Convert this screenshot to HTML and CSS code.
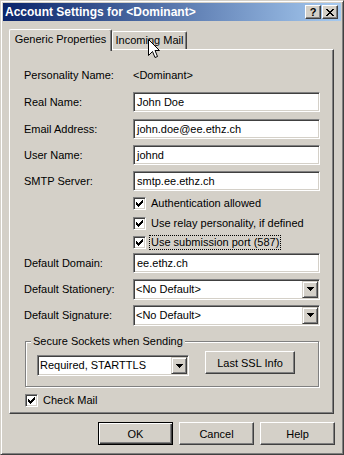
FILE: index.html
```html
<!DOCTYPE html>
<html lang="en">
<head>
    <meta charset="UTF-8">
    <title>Account Settings</title>
    <link rel="stylesheet" href="styles.css">
</head>
<body>
    <!-- Dialog window -->
    <div class="window">
        <div class="titlebar">
            <span class="title">Account Settings for &lt;Dominant&gt;</span>
            <div class="caption-btns">
                <span class="cap-btn cap-help">?</span>
                <span class="cap-btn">
                    <svg width="8" height="7" viewBox="0 0 8 7" shape-rendering="crispEdges"><path d="M0 0h2v1h-2zM6 0h2v1h-2zM1 1h2v1h-2zM5 1h2v1h-2zM2 2h4v1h-4zM3 3h2v1h-2zM2 4h4v1h-4zM1 5h2v1h-2zM5 5h2v1h-2zM0 6h2v1h-2zM6 6h2v1h-2z" fill="#000"/></svg>
                </span>
            </div>
        </div>

        <div class="client">
            <div class="tabs">
                <div class="tab tab-active">Generic Properties</div>
                <div class="tab tab-idle">Incoming Mail</div>
            </div>

            <div class="panel">
                <div class="row row-first">
                    <span class="label">Personality Name:</span>
                    <span>&lt;Dominant&gt;</span>
                </div>

                <div class="row row-gap7">
                    <span class="label">Real Name:</span>
                    <div class="edit">John Doe</div>
                </div>

                <div class="row row-gap7">
                    <span class="label">Email Address:</span>
                    <div class="edit">john.doe@ee.ethz.ch</div>
                </div>

                <div class="row">
                    <span class="label">User Name:</span>
                    <div class="edit">johnd</div>
                </div>

                <div class="row">
                    <span class="label">SMTP Server:</span>
                    <div class="edit">smtp.ee.ethz.ch</div>
                </div>

                <div class="check-row indent">
                    <span class="check"><svg width="7" height="7" viewBox="0 0 7 7" shape-rendering="crispEdges"><path d="M6 0h1v1h-1zM5 1h2v1h-2zM0 2h1v1h-1zM4 2h3v1h-3zM0 3h2v1h-2zM3 3h3v1h-3zM0 4h5v1h-5zM1 5h3v1h-3zM2 6h1v1h-1z" fill="#000"/></svg></span>
                    <span class="check-label">Authentication allowed</span>
                </div>

                <div class="check-row indent">
                    <span class="check"><svg width="7" height="7" viewBox="0 0 7 7" shape-rendering="crispEdges"><path d="M6 0h1v1h-1zM5 1h2v1h-2zM0 2h1v1h-1zM4 2h3v1h-3zM0 3h2v1h-2zM3 3h3v1h-3zM0 4h5v1h-5zM1 5h3v1h-3zM2 6h1v1h-1z" fill="#000"/></svg></span>
                    <span class="check-label">Use relay personality, if defined</span>
                </div>

                <div class="check-row indent check-row-tight">
                    <span class="check"><svg width="7" height="7" viewBox="0 0 7 7" shape-rendering="crispEdges"><path d="M6 0h1v1h-1zM5 1h2v1h-2zM0 2h1v1h-1zM4 2h3v1h-3zM0 3h2v1h-2zM3 3h3v1h-3zM0 4h5v1h-5zM1 5h3v1h-3zM2 6h1v1h-1z" fill="#000"/></svg></span>
                    <span class="check-label focused">Use submission port (587)</span>
                </div>

                <div class="row row-gap3">
                    <span class="label">Default Domain:</span>
                    <div class="edit">ee.ethz.ch</div>
                </div>

                <div class="row">
                    <span class="label">Default Stationery:</span>
                    <div class="combo combo-wide">
                        <span class="combo-text">&lt;No Default&gt;</span>
                        <span class="combo-arrow"><svg width="7" height="4" viewBox="0 0 7 4" shape-rendering="crispEdges"><path d="M0 0h7v1h-7zM1 1h5v1h-5zM2 2h3v1h-3zM3 3h1v1h-1z" fill="#000"/></svg></span>
                    </div>
                </div>

                <div class="row">
                    <span class="label">Default Signature:</span>
                    <div class="combo combo-wide">
                        <span class="combo-text">&lt;No Default&gt;</span>
                        <span class="combo-arrow"><svg width="7" height="4" viewBox="0 0 7 4" shape-rendering="crispEdges"><path d="M0 0h7v1h-7zM1 1h5v1h-5zM2 2h3v1h-3zM3 3h1v1h-1z" fill="#000"/></svg></span>
                    </div>
                </div>

                <fieldset class="group">
                    <legend>Secure Sockets when Sending</legend>
                    <div class="group-row">
                        <div class="combo combo-ssl">
                            <span class="combo-text">Required, STARTTLS</span>
                            <span class="combo-arrow"><svg width="7" height="4" viewBox="0 0 7 4" shape-rendering="crispEdges"><path d="M0 0h7v1h-7zM1 1h5v1h-5zM2 2h3v1h-3zM3 3h1v1h-1z" fill="#000"/></svg></span>
                        </div>
                        <button type="button" class="btn btn-ssl">Last SSL Info</button>
                    </div>
                </fieldset>

                <div class="check-row check-mail">
                    <span class="check"><svg width="7" height="7" viewBox="0 0 7 7" shape-rendering="crispEdges"><path d="M6 0h1v1h-1zM5 1h2v1h-2zM0 2h1v1h-1zM4 2h3v1h-3zM0 3h2v1h-2zM3 3h3v1h-3zM0 4h5v1h-5zM1 5h3v1h-3zM2 6h1v1h-1z" fill="#000"/></svg></span>
                    <span class="check-label">Check Mail</span>
                </div>
            </div>

            <div class="actions">
                <button type="button" class="btn btn-default">OK</button>
                <button type="button" class="btn">Cancel</button>
                <button type="button" class="btn">Help</button>
            </div>
        </div>

        <!-- mouse pointer over the second tab -->
        <svg class="cursor" width="12" height="19" viewBox="0 0 12 19">
            <path d="M0.5 0.5V16.5L4.5 12.5L7 18.5L9.5 17.5L7 11.5H11.5Z" fill="#fff" stroke="#000" stroke-width="1" stroke-linejoin="miter"/>
        </svg>
    </div>
</body>
</html>
```

FILE: styles.css
```css
/* Classic dialog look */
* {
    box-sizing: border-box;
}

body {
    margin: 0;
    font-family: 'Liberation Sans', Arial, sans-serif;
    font-size: 11px;
    color: #000;
    background: #d4d0c8;
}

.window {
    position: relative;
    width: 344px;
    height: 455px;
    padding: 2px;
    background: #d4d0c8;
    border: 1px solid;
    border-color: #d4d0c8 #404040 #404040 #d4d0c8;
    box-shadow: inset 1px 1px #fff, inset -1px -1px #808080;
}

/* Title bar */
.titlebar {
    height: 18px;
    display: flex;
    align-items: center;
    justify-content: space-between;
    padding: 0 3px 0 2px;
    background: linear-gradient(to right, #0a246a, #a6caf0);
}

.title {
    color: #fff;
    font-weight: bold;
    font-size: 12px;
}

.caption-btns {
    display: flex;
    gap: 1px;
}

.cap-btn {
    width: 16px;
    height: 14px;
    display: flex;
    align-items: center;
    justify-content: center;
    background: #d4d0c8;
    border: 1px solid;
    border-color: #fff #404040 #404040 #fff;
    box-shadow: inset -1px -1px #808080;
}

.cap-help {
    font-weight: bold;
    font-size: 11px;
    line-height: 12px;
}

/* Tabs */
.client {
    padding: 8px 0 0 6px;
}

.tabs {
    display: flex;
    align-items: flex-end;
    height: 20px;
}

.tab {
    position: relative;
    background: #d4d0c8;
    border-top: 1px solid #fff;
    border-left: 1px solid #fff;
    border-right: 1px solid #404040;
    box-shadow: inset -1px 0 #808080;
    border-radius: 2px 2px 0 0;
    text-align: center;
    line-height: 13px;
}

.tab-active {
    width: 103px;
    height: 22px;
    margin-bottom: -2px;
    padding-top: 3px;
    z-index: 1;
}

.tab-idle {
    width: 75px;
    height: 18px;
    padding-top: 2px;
}

.panel {
    width: 325px;
    height: 365px;
    padding: 15px 0 0 14px;
    border: 1px solid;
    border-color: #fff #404040 #404040 #fff;
    box-shadow: inset -1px -1px #808080;
}

/* Form rows */
.row {
    display: flex;
    align-items: center;
    height: 20px;
    margin-top: 6px;
}

.row-first {
    margin-top: 0;
}

.row-gap7 {
    margin-top: 7px;
}

.row-gap3 {
    margin-top: 3px;
}

.label {
    width: 109px;
    flex-shrink: 0;
}

.edit {
    width: 187px;
    height: 20px;
    padding: 0 3px;
    line-height: 18px;
    background: #fff;
    border: 1px solid;
    border-color: #808080 #fff #fff #808080;
    box-shadow: inset 1px 1px #404040, inset -1px -1px #d4d0c8;
}

.combo {
    display: flex;
    height: 21px;
    padding: 1px;
    background: #fff;
    border: 1px solid;
    border-color: #808080 #fff #fff #808080;
    box-shadow: inset 1px 1px #404040, inset -1px -1px #d4d0c8;
}

.combo-wide {
    width: 187px;
}

.combo-text {
    flex: 1;
    padding-left: 1px;
    line-height: 17px;
}

.combo-arrow {
    width: 16px;
    height: 17px;
    display: flex;
    align-items: center;
    justify-content: center;
    background: #d4d0c8;
    border: 1px solid;
    border-color: #d4d0c8 #404040 #404040 #d4d0c8;
    box-shadow: inset 1px 1px #fff, inset -1px -1px #808080;
}

/* Checkboxes */
.check-row {
    display: flex;
    align-items: center;
    height: 15px;
    margin-top: 5px;
}

.check-row-tight {
    margin-top: 4px;
}

.indent {
    padding-left: 109px;
}

.check {
    width: 13px;
    height: 13px;
    padding: 2px;
    flex-shrink: 0;
    background: #fff;
    border: 1px solid;
    border-color: #808080 #fff #fff #808080;
    box-shadow: inset 1px 1px #404040, inset -1px -1px #d4d0c8;
}

.check svg {
    display: block;
}

.check-label {
    margin-left: 3px;
    padding: 0 1px;
    border: 1px solid transparent;
    line-height: 13px;
}

.focused {
    border: 1px dotted #000;
}

/* Group box */
.group {
    width: 294px;
    margin: 9px 0 0 1px;
    padding: 0 11px 10px;
    border: 1px solid #808080;
    box-shadow: 1px 1px #fff, inset 1px 1px #fff;
}

.group legend {
    margin-left: -6px;
    padding: 0 2px;
    line-height: 14px;
    background: #d4d0c8;
}

.group-row {
    display: flex;
    align-items: flex-start;
    gap: 16px;
}

.combo-ssl {
    width: 152px;
    margin-top: 7px;
}

.check-mail {
    margin-top: 6px;
    margin-left: 1px;
}

/* Buttons */
.btn {
    width: 75px;
    height: 23px;
    padding: 0;
    font: inherit;
    color: #000;
    background: #d4d0c8;
    border: 1px solid;
    border-color: #fff #404040 #404040 #fff;
    box-shadow: inset -1px -1px #808080;
}

.btn-default {
    border-color: #000;
    box-shadow: inset 1px 1px #fff, inset -1px -1px #404040, inset -2px -2px #808080;
}

.btn-ssl {
    width: 90px;
    margin-top: 3px;
}

.actions {
    display: flex;
    justify-content: flex-end;
    gap: 6px;
    width: 326px;
    margin-top: 8px;
}

.cursor {
    position: absolute;
    left: 147px;
    top: 38px;
}
```
